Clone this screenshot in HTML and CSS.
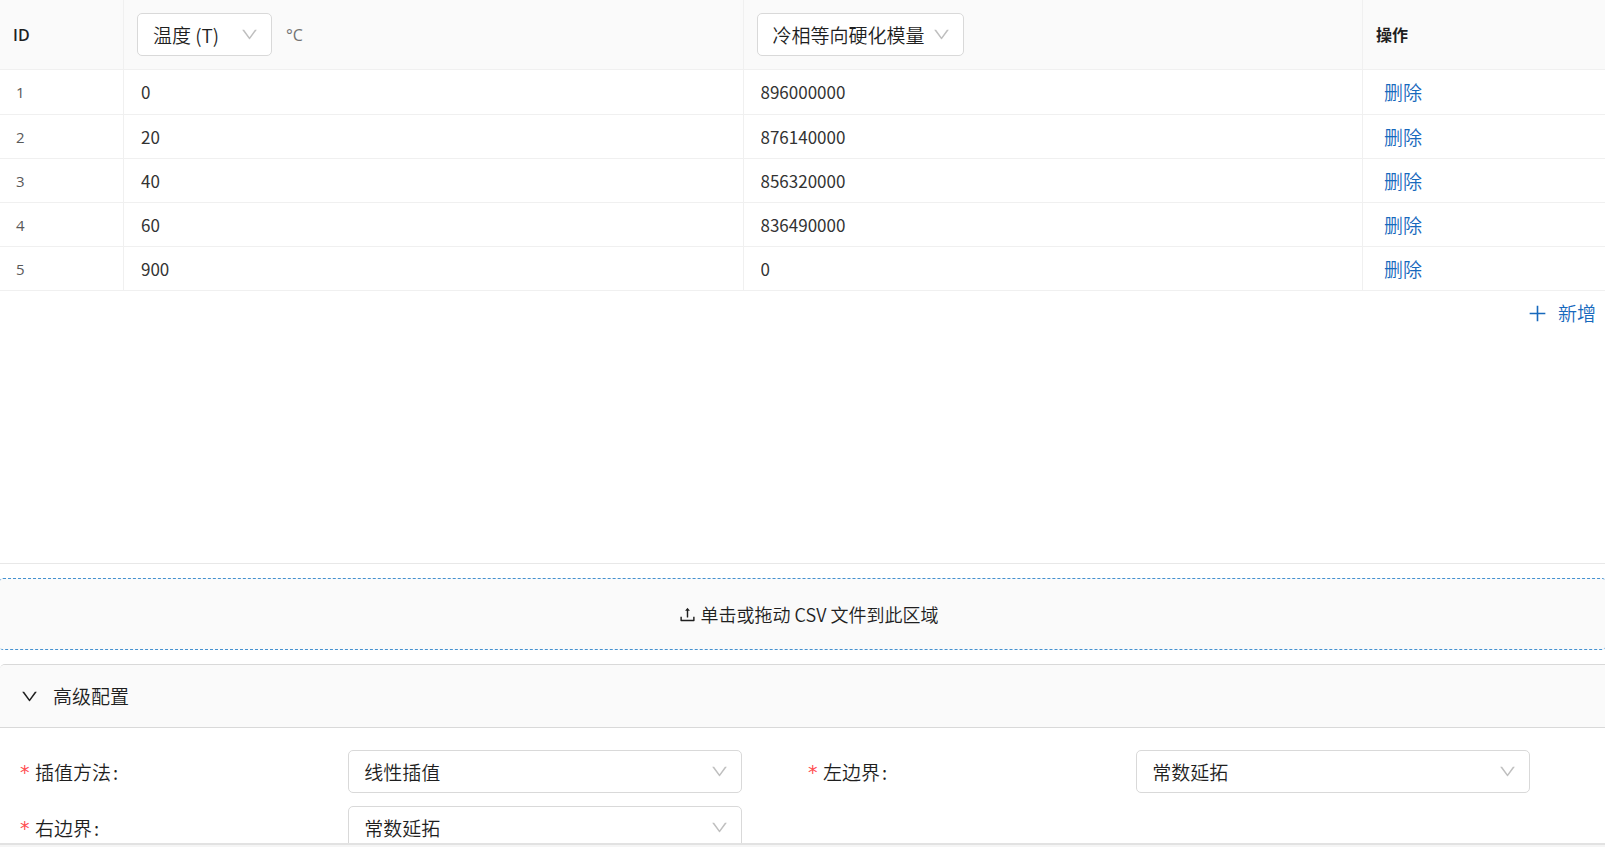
FILE: index.html
```html
<!DOCTYPE html>
<html lang="zh-CN">
<head>
<meta charset="utf-8">
<title>高级配置</title>
<link rel="stylesheet" href="styles.css">
</head>
<body>
<svg class="sprite" aria-hidden="true">
  <symbol id="icon-down" viewBox="64 64 896 896"><path d="M884 256h-75c-5.1 0-9.9 2.5-12.9 6.6L512 654.2 227.9 262.6c-3-4.1-7.8-6.6-12.9-6.6h-75c-6.5 0-10.3 7.4-6.5 12.7l352.6 486.1c12.8 17.6 39 17.6 51.7 0l352.6-486.1c3.9-5.3.1-12.7-6.4-12.7z"/></symbol>
  <symbol id="icon-upload" viewBox="64 64 896 896"><path d="M400 317.7h73.9V656c0 4.4 3.6 8 8 8h60c4.4 0 8-3.6 8-8V317.7H624c6.7 0 10.4-7.7 6.3-12.9L518.3 163a8 8 0 00-12.6 0l-112 141.7c-4.1 5.3-.4 13 6.3 13zM878 626h-60c-4.4 0-8 3.6-8 8v154H214V634c0-4.4-3.6-8-8-8h-60c-4.4 0-8 3.6-8 8v198c0 17.7 14.3 32 32 32h684c17.7 0 32-14.3 32-32V634c0-4.4-3.6-8-8-8z"/></symbol>
  <symbol id="icon-plus" viewBox="64 64 896 896"><path d="M482 142h60q8 0 8 8v724q0 8-8 8h-60q-8 0-8-8V150q0-8 8-8z"/><path d="M150 474h724q8 0 8 8v60q0 8-8 8H150q-8 0-8-8v-60q0-8 8-8z"/></symbol>
</svg>
<main class="content">
  <section class="data">
    <table class="table">
      <colgroup><col class="col-id"><col><col><col class="col-action"></colgroup>
      <thead>
        <tr>
          <th scope="col">ID</th>
          <th scope="col">
            <div class="head-field">
              <span class="select select-variable">
                <select aria-label="自变量"><option>温度 (T)</option></select>
                <svg class="arrow"><use href="#icon-down"/></svg>
              </span>
              <span class="unit">°C</span>
            </div>
          </th>
          <th scope="col">
            <div class="head-field">
              <span class="select select-property">
                <select aria-label="因变量"><option>冷相等向硬化模量</option></select>
                <svg class="arrow"><use href="#icon-down"/></svg>
              </span>
            </div>
          </th>
          <th scope="col">操作</th>
        </tr>
      </thead>
      <tbody>
        <tr><td class="index">1</td><td><input class="cell" aria-label="温度 1" value="0"></td><td><input class="cell" aria-label="模量 1" value="896000000"></td><td class="action"><button class="link" type="button">删除</button></td></tr>
        <tr><td class="index">2</td><td><input class="cell" aria-label="温度 2" value="20"></td><td><input class="cell" aria-label="模量 2" value="876140000"></td><td class="action"><button class="link" type="button">删除</button></td></tr>
        <tr><td class="index">3</td><td><input class="cell" aria-label="温度 3" value="40"></td><td><input class="cell" aria-label="模量 3" value="856320000"></td><td class="action"><button class="link" type="button">删除</button></td></tr>
        <tr><td class="index">4</td><td><input class="cell" aria-label="温度 4" value="60"></td><td><input class="cell" aria-label="模量 4" value="836490000"></td><td class="action"><button class="link" type="button">删除</button></td></tr>
        <tr><td class="index">5</td><td><input class="cell" aria-label="温度 5" value="900"></td><td><input class="cell" aria-label="模量 5" value="0"></td><td class="action"><button class="link" type="button">删除</button></td></tr>
      </tbody>
    </table>
    <div class="add-row">
      <button class="link" type="button"><svg class="plus"><use href="#icon-plus"/></svg>新增</button>
    </div>
  </section>

  <button class="upload" type="button"><svg class="upload-icon"><use href="#icon-upload"/></svg>单击或拖动 CSV 文件到此区域</button>

  <section class="panel">
    <button class="panel-head" type="button" aria-expanded="true"><svg class="fold"><use href="#icon-down"/></svg>高级配置</button>
    <form class="form">
      <div class="field">
        <label for="method"><span class="required">*</span>插值方法<span class="colon">:</span></label>
        <span class="select"><select id="method"><option>线性插值</option></select><svg class="arrow"><use href="#icon-down"/></svg></span>
      </div>
      <div class="field">
        <label for="left"><span class="required">*</span>左边界<span class="colon">:</span></label>
        <span class="select"><select id="left"><option>常数延拓</option></select><svg class="arrow"><use href="#icon-down"/></svg></span>
      </div>
      <div class="field">
        <label for="right"><span class="required">*</span>右边界<span class="colon">:</span></label>
        <span class="select"><select id="right"><option>常数延拓</option></select><svg class="arrow"><use href="#icon-down"/></svg></span>
      </div>
    </form>
  </section>
</main>
<footer class="edge"></footer>
</body>
</html>
```

FILE: styles.css
```css
* {
  box-sizing: border-box;
}

body {
  margin: 0;
  height: 100vh;
  display: flex;
  flex-direction: column;
  overflow: hidden;
  background: #fff;
  color: #1f1f1f;
  font-family: "Noto Sans CJK SC", sans-serif;
  font-size: 19px;
  font-weight: 350;
  line-height: 28px;
}

button,
input,
select {
  font: inherit;
  color: inherit;
}

svg {
  flex: none;
  fill: currentColor;
}

.sprite {
  display: none;
}

.content {
  flex: 1;
  min-height: 0;
  overflow: hidden;
}

.data {
  min-height: 564px;
  border-bottom: 1px solid #e8e8e8;
}

.table {
  width: 100%;
  table-layout: fixed;
  border-collapse: separate;
  border-spacing: 0;
}

.col-id {
  width: 124px;
}

.col-action {
  width: 242px;
}

th,
td {
  padding: 0 13px;
  border-right: 1px solid #f0f0f0;
  border-bottom: 1px solid #f0f0f0;
  text-align: left;
}

th:last-child,
td:last-child {
  border-right: 0;
}

th {
  height: 70px;
  background: #fafafa;
  font-family: "Open Sans", "Noto Sans CJK SC", sans-serif;
  font-size: 16px;
  font-weight: 600;
}

td {
  height: 44px;
}

tbody tr:first-child td {
  height: 45px;
}

.index {
  padding-left: 16px;
  color: #595959;
  font-family: "Open Sans", sans-serif;
  font-size: 15px;
  font-weight: 400;
}

.cell {
  display: block;
  width: 100%;
  padding: 0 4px;
  border: 0;
  outline: 0;
  background: transparent;
  color: #333;
  font-size: 17px;
  font-weight: 400;
}

.action {
  padding-left: 21px;
}

.link {
  display: inline-flex;
  align-items: center;
  gap: 11px;
  padding: 0;
  border: 0;
  background: none;
  color: #1769bd;
  cursor: pointer;
}

.plus {
  width: 19px;
  height: 19px;
}

.add-row {
  display: flex;
  justify-content: flex-end;
  padding: 8px 9px;
}

.head-field {
  display: flex;
  align-items: center;
  gap: 14px;
}

.unit {
  color: #737373;
  font-size: 16px;
  font-weight: 400;
}

.select {
  position: relative;
  display: block;
}

.select select {
  display: block;
  width: 100%;
  height: 43px;
  padding: 0 40px 0 15px;
  appearance: none;
  border: 1px solid #d9d9d9;
  border-radius: 5px;
  background: #fff;
  font-family: "Noto Sans CJK SC", sans-serif;
  font-size: 19px;
  font-weight: 350;
}

.select-variable {
  width: 135px;
}

.select-property {
  width: 207px;
}

.select-property select {
  padding-right: 36px;
}

.arrow {
  position: absolute;
  top: 13px;
  right: 14px;
  width: 17px;
  height: 17px;
  color: #bfbfbf;
  pointer-events: none;
}

.upload {
  display: flex;
  align-items: center;
  justify-content: center;
  gap: 5px;
  width: 100%;
  height: 72px;
  margin: 14px 0;
  padding: 0 0 0 12px;
  border: 1px dashed #4592d1;
  border-width: 1px 0;
  border-radius: 3px;
  background: #fafafa;
  font-size: 18px;
  cursor: pointer;
}

.upload-icon {
  width: 17px;
  height: 17px;
}

.panel {
  border-top: 1px solid #d9d9d9;
  border-radius: 5px 0 0;
}

.panel-head {
  display: flex;
  align-items: center;
  gap: 15px;
  width: 100%;
  height: 63px;
  padding: 0 21px;
  border: 0;
  border-bottom: 1px solid #d9d9d9;
  border-radius: 5px 0 0;
  background: #fafafa;
  cursor: pointer;
}

.fold {
  width: 17px;
  height: 17px;
}

.form {
  display: grid;
  grid-template-columns: 1fr 1fr;
  row-gap: 13px;
  padding: 22px 9px 22px 20px;
}

.field {
  display: grid;
  grid-template-columns: 10fr 12fr 2fr;
  align-items: center;
}

label {
  display: flex;
  align-items: center;
}

.required {
  width: 15px;
  color: #ff4d4f;
  font-family: "DejaVu Sans", sans-serif;
  font-size: 19px;
  font-weight: 400;
}

.colon {
  margin-left: 2px;
}

.edge {
  height: 4px;
  border-top: 2px solid #e2e2e2;
  background: #f5f5f5;
}
```
